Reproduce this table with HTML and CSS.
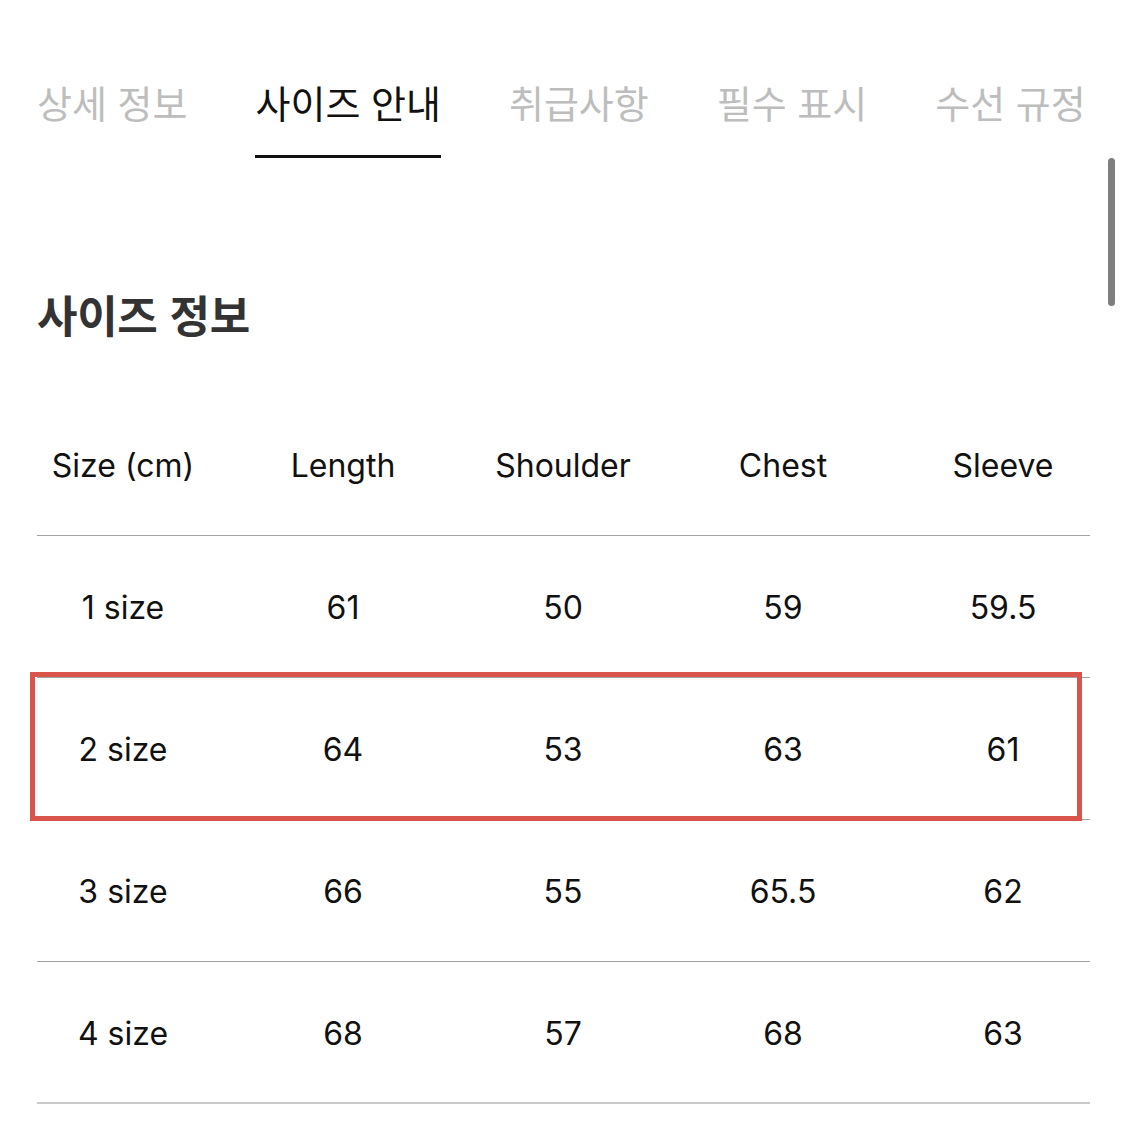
FILE: index.html
```html
<!DOCTYPE html>
<html lang="ko">
<head>
<meta charset="utf-8">
<title>사이즈 안내</title>
<link rel="stylesheet" href="styles.css">
</head>
<body>
<div class="page">
  <nav class="tabs">
    <span class="tab">상세 정보</span>
    <span class="tab active">사이즈 안내</span>
    <span class="tab">취급사항</span>
    <span class="tab">필수 표시</span>
    <span class="tab">수선 규정</span>
  </nav>

  <h2 class="title">사이즈 정보</h2>

  <div class="table">
    <div class="row head">
      <span>Size (cm)</span><span>Length</span><span>Shoulder</span><span>Chest</span><span>Sleeve</span>
    </div>
    <div class="row">
      <span>1 size</span><span>61</span><span>50</span><span>59</span><span>59.5</span>
    </div>
    <div class="row marked">
      <span>2 size</span><span>64</span><span>53</span><span>63</span><span>61</span>
      <i class="mark"></i>
    </div>
    <div class="row">
      <span>3 size</span><span>66</span><span>55</span><span>65.5</span><span>62</span>
    </div>
    <div class="row last">
      <span>4 size</span><span>68</span><span>57</span><span>68</span><span>63</span>
    </div>
  </div>
</div>
<div class="scrollbar"></div>
</body>
</html>
```

FILE: styles.css
```css
* { box-sizing: border-box; }
html, body { margin: 0; padding: 0; background: #fff; }
body {
  font-family: "Inter", "Noto Sans CJK KR", sans-serif;
  color: #111;
  width: 1125px;
  height: 1141px;
  overflow: hidden;
}
.page {
  width: 1125px;
  padding: 80px 12px 0 13px;
}
.tabs {
  display: flex;
  gap: 68px;
  padding-left: 24px;
  font-family: "Noto Sans CJK KR", sans-serif;
}
.tab {
  font-size: 38px;
  line-height: 44px;
  color: #bdbdbd;
  padding-bottom: 31px;
  border-bottom: 3px solid transparent;
  white-space: nowrap;
}
.tab.active {
  color: #111;
  border-bottom-color: #111;
}
.title {
  margin: 130px 0 0 24px;
  font-family: "Noto Sans CJK KR", sans-serif;
  font-size: 44px;
  letter-spacing: -0.3px;
  line-height: 52px;
  font-weight: 700;
  color: #333;
}
.table {
  margin-top: 54px;
  width: 1100px;
}
.row {
  position: relative;
  display: grid;
  grid-template-columns: repeat(5, 220px);
  align-items: center;
  height: 142px;
  font-size: 32px;
  text-align: center;
  background: linear-gradient(#a3a3a3, #a3a3a3) no-repeat 24px 100% / 1053px 1px;
}
.row.last {
  background-image: linear-gradient(#c9c9c9, #c9c9c9);
  background-size: 1053px 2px;
}
.mark {
  position: absolute;
  left: 17px;
  right: 31px;
  top: -6px;
  bottom: -1px;
  border: 5px solid #d9544b;
}
.scrollbar {
  position: fixed;
  left: 1108px;
  top: 158px;
  width: 7px;
  height: 148px;
  border-radius: 4px;
  background: #7f7f7f;
}
```
